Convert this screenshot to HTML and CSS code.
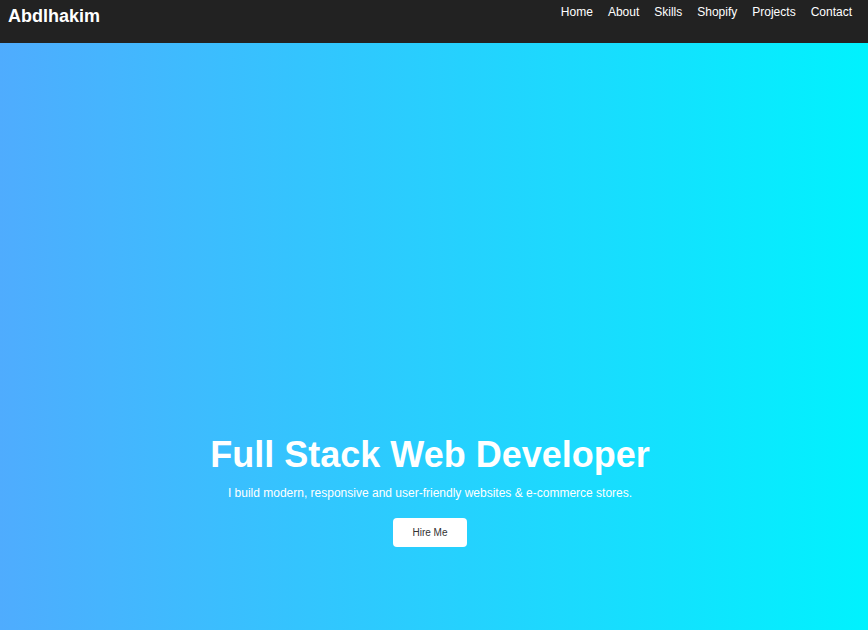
FILE: index.html
```html
<!DOCTYPE html>
<html lang="en">
<head>
    <meta charset="UTF-8">
    <meta name="viewport" content="width=device-width, initial-scale=1.0">
    <title>Abdlhakim - Full Stack Web Developer</title>
    <link rel="stylesheet" href="styles.css">
</head>
<body>
    <header class="header">
        <div class="logo">Abdlhakim</div>
        <nav class="nav">
            <a href="#home">Home</a>
            <a href="#about">About</a>
            <a href="#skills">Skills</a>
            <a href="#shopify">Shopify</a>
            <a href="#projects">Projects</a>
            <a href="#contact">Contact</a>
        </nav>
    </header>

    <section class="hero" id="home">
        <div class="hero-content">
            <h1>Full Stack Web Developer</h1>
            <p>I build modern, responsive and user-friendly websites &amp; e-commerce stores.</p>
            <a href="#contact" class="btn">Hire Me</a>
        </div>
    </section>
</body>
</html>
```

FILE: styles.css
```css
* {
    box-sizing: border-box;
}
body {
    font-family: Arial, "Liberation Sans", sans-serif;
    margin: 0;
    padding: 0;
    color: white;
}
.header {
    display: flex;
    justify-content: space-between;
    align-items: flex-start;
    height: 43px;
    padding: 5px 16px 0 8px;
    background: #222222;
}
.logo {
    font-size: 18px;
    font-weight: bold;
    margin-top: 1px;
}
.nav {
    display: flex;
    gap: 15px;
}
.nav a {
    color: white;
    text-decoration: none;
    font-size: 12px;
}
.hero {
    height: calc(100vh - 43px);
    background: linear-gradient(to right, #4facfe, #00f2fe);
    display: flex;
    flex-direction: column;
    justify-content: flex-end;
    align-items: center;
    padding: 0 8px 83px 0;
    text-align: center;
}
.hero h1 {
    font-size: 36px;
    margin: 0 0 10px;
}
.hero p {
    font-size: 12px;
    margin: 0 0 18px;
}
.btn {
    display: inline-block;
    padding: 9px 19px;
    background: white;
    color: #333;
    font-size: 10px;
    text-decoration: none;
    border-radius: 4px;
}
```
